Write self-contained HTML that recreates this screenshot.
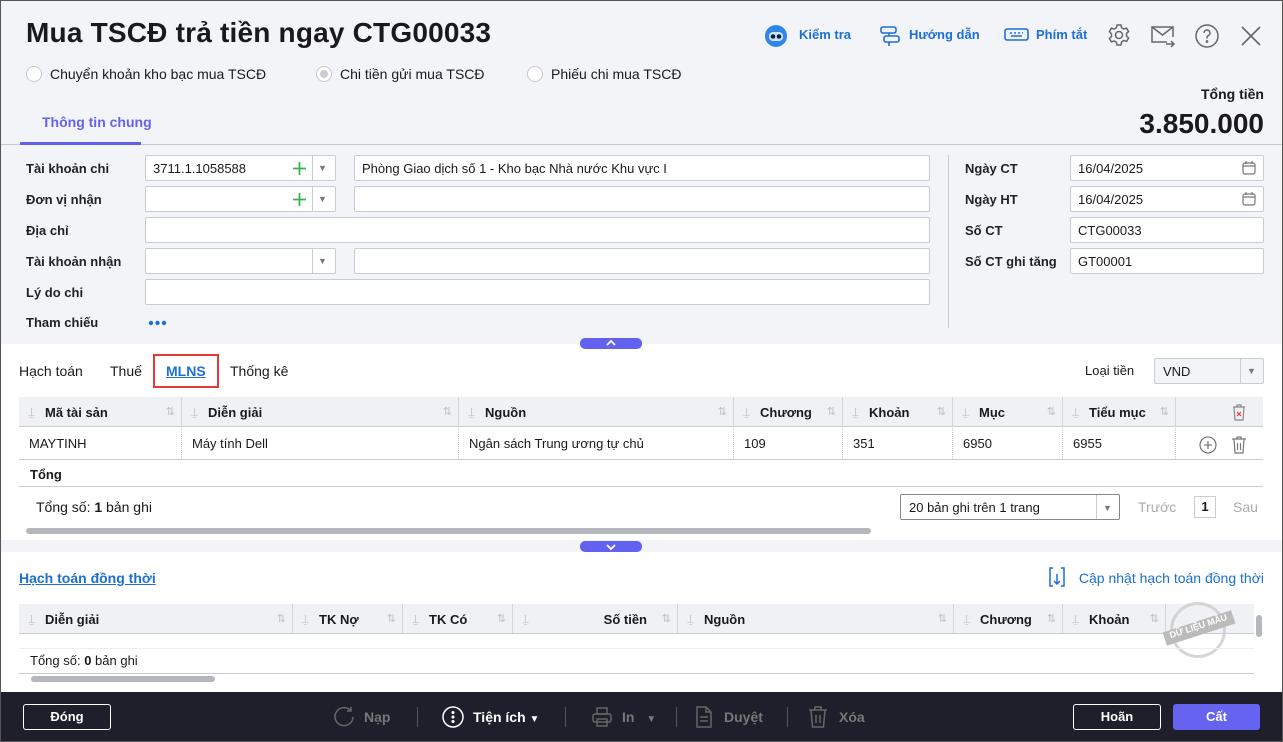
<!DOCTYPE html>
<html><head><meta charset="utf-8">
<style>
*{box-sizing:border-box;margin:0;padding:0}
body{width:1283px;height:742px;overflow:hidden;font-family:"Liberation Sans",sans-serif;font-size:13px;color:#1a1a1a;background:#fff;position:relative}
.a{position:absolute}
.frame{position:absolute;left:0;top:0;width:1283px;height:742px;border:1px solid #555;pointer-events:none;z-index:9}
.top{left:0;top:0;width:1283px;height:344px;background:#f3f4f8}
.lbl{font-weight:bold;font-size:13px;color:#222}
.inp{background:#fff;border:1px solid #c9ccd4;border-radius:2px;height:26px;padding:5px 7px;font-size:13px}
.radio{width:16px;height:16px;border:1px solid #c6c8cc;border-radius:50%;background:#fff}
.th{background:#f0f1f5;height:30px;border-bottom:1px solid #c9ccd4}
.col{position:absolute;top:0;height:100%;font-weight:bold;padding:8px 0 0 26px;border-right:1px solid #d4d6dc}
.col .pin{position:absolute;left:9px;top:8px;color:#bbb;font-weight:normal;font-size:12px}
.col .srt{position:absolute;right:6px;top:8px;color:#c0c0c0;font-weight:normal;font-size:11px}
.td{position:absolute;top:0;height:100%;padding:8px 0 0 10px;border-right:1px dotted #ccc}
.blue{color:#1c6fd4}
.fb{color:#777;font-weight:bold;font-size:14px}
.btn{border:1px solid #fff;border-radius:3px;color:#fff;font-weight:bold;text-align:center;height:26px;line-height:24px;font-size:13px}
.sep{width:1px;height:20px;background:#555;top:707px}
</style></head><body>
<div class="frame"></div>
<div class="a top"></div>
<div class="a" style="left:26px;top:17px;font-size:28px;font-weight:bold;color:#1a1a1a;letter-spacing:0.2px">Mua TSCĐ trả tiền ngay CTG00033</div>

<div class="a radio" style="left:26px;top:66px"></div><div class="a" style="left:50px;top:66px;font-size:14px">Chuyển khoản kho bạc mua TSCĐ</div>
<div class="a radio" style="left:316px;top:66px"><div style="width:8px;height:8px;border-radius:50%;background:#ccc;margin:3px"></div></div><div class="a" style="left:340px;top:66px;font-size:14px">Chi tiền gửi mua TSCĐ</div>
<div class="a radio" style="left:527px;top:66px"></div><div class="a" style="left:551px;top:66px;font-size:14px">Phiếu chi mua TSCĐ</div>

<svg class="a" style="left:764px;top:24px" width="24" height="24"><circle cx="12" cy="12" r="11" fill="#2f86e6"/><rect x="5" y="8" width="14" height="9" rx="4" fill="#cde3fb"/><circle cx="9" cy="12.5" r="2.3" fill="#123"/><circle cx="15" cy="12.5" r="2.3" fill="#123"/></svg>
<div class="a blue" style="left:799px;top:27px;font-weight:bold">Kiểm tra</div>
<svg class="a" style="left:878px;top:24px" width="24" height="24" fill="none" stroke="#1c6fd4" stroke-width="1.6"><rect x="3" y="3" width="15" height="6" rx="2"/><rect x="6" y="12" width="15" height="6" rx="2"/><path d="M11 9v3M11 18v4"/></svg>
<div class="a blue" style="left:909px;top:27px;font-weight:bold">Hướng dẫn</div>
<svg class="a" style="left:1004px;top:27px" width="25" height="16" fill="none" stroke="#1c6fd4" stroke-width="1.6"><rect x="1" y="2" width="23" height="11" rx="2"/><path d="M6 6h2M10 6h2M14 6h2M18 6h1M7 9h11"/></svg>
<div class="a blue" style="left:1036px;top:27px;font-weight:bold">Phím tắt</div>
<svg class="a" style="left:1107px;top:23px" width="24" height="24" fill="none" stroke="#666" stroke-width="1.5"><circle cx="12" cy="12" r="3.5"/><path d="M10 2h4l.6 2.8 2.3 1.3 2.7-.9 2 3.4-2.1 1.9v2.6l2.1 1.9-2 3.4-2.7-.9-2.3 1.3L14 22h-4l-.6-2.8-2.3-1.3-2.7.9-2-3.4 2.1-1.9v-2.6L2.4 8.6l2-3.4 2.7.9 2.3-1.3z"/></svg>
<svg class="a" style="left:1150px;top:24px" width="26" height="24" fill="none" stroke="#666" stroke-width="1.5"><path d="M17 18H2V3h21v10"/><path d="M2 3l10.5 8L23 3"/><path d="M16 20h8M21 17l3 3-3 3"/></svg>
<svg class="a" style="left:1195px;top:24px" width="24" height="24" fill="none" stroke="#666" stroke-width="1.5"><circle cx="12" cy="12" r="11"/><path d="M9 9a3 3 0 1 1 4 2.8c-.8.4-1 1-1 2v.7"/><circle cx="12" cy="17.5" r=".6" fill="#666"/></svg>
<svg class="a" style="left:1240px;top:25px" width="22" height="22" stroke="#666" stroke-width="1.6"><path d="M2 2l18 18M20 2L2 20"/></svg>

<div class="a" style="right:19px;top:86px;font-size:14px;font-weight:bold">Tổng tiền</div>
<div class="a" style="right:19px;top:108px;font-size:28px;font-weight:bold">3.850.000</div>

<div class="a" style="left:42px;top:114px;font-weight:bold;font-size:14px;color:#6563ee">Thông tin chung</div>
<div class="a" style="left:0;top:144px;width:1283px;height:1px;background:#c8c9cd"></div>
<div class="a" style="left:20px;top:142px;width:121px;height:3px;background:#5f5ff0"></div>

<div class="a lbl" style="left:26px;top:161px">Tài khoản chi</div>
<div class="a lbl" style="left:26px;top:192px">Đơn vị nhận</div>
<div class="a lbl" style="left:26px;top:223px">Địa chỉ</div>
<div class="a lbl" style="left:26px;top:254px">Tài khoản nhận</div>
<div class="a lbl" style="left:26px;top:285px">Lý do chi</div>
<div class="a lbl" style="left:26px;top:315px">Tham chiếu</div>
<svg class="a" style="left:148px;top:320px" width="20" height="6" fill="#1c6fd4"><circle cx="3" cy="3" r="2.2"/><circle cx="9.5" cy="3" r="2.2"/><circle cx="16" cy="3" r="2.2"/></svg>

<div class="a inp" style="left:145px;top:155px;width:191px">3711.1.1058588</div>
<div class="a inp" style="left:145px;top:186px;width:191px"></div>
<div class="a inp" style="left:145px;top:248px;width:191px"></div>
<div class="a" style="left:312px;top:156px;width:1px;height:24px;background:#c9ccd4"></div>
<div class="a" style="left:312px;top:187px;width:1px;height:24px;background:#c9ccd4"></div>
<div class="a" style="left:312px;top:249px;width:1px;height:24px;background:#c9ccd4"></div>
<svg class="a" style="left:292px;top:161px" width="15" height="15" stroke="#3bb34a" stroke-width="1.8"><path d="M7.5 1v13M1 7.5h13"/></svg>
<svg class="a" style="left:292px;top:192px" width="15" height="15" stroke="#3bb34a" stroke-width="1.8"><path d="M7.5 1v13M1 7.5h13"/></svg>
<div class="a" style="left:318px;top:163px;color:#777;font-size:9px">▼</div>
<div class="a" style="left:318px;top:194px;color:#777;font-size:9px">▼</div>
<div class="a" style="left:318px;top:256px;color:#777;font-size:9px">▼</div>
<div class="a inp" style="left:354px;top:155px;width:576px">Phòng Giao dịch số 1 - Kho bạc Nhà nước Khu vực I</div>
<div class="a inp" style="left:354px;top:186px;width:576px"></div>
<div class="a inp" style="left:145px;top:217px;width:785px"></div>
<div class="a inp" style="left:354px;top:248px;width:576px"></div>
<div class="a inp" style="left:145px;top:279px;width:785px"></div>

<div class="a" style="left:948px;top:155px;width:1px;height:173px;background:#c8c9cd"></div>
<div class="a lbl" style="left:965px;top:161px">Ngày CT</div>
<div class="a lbl" style="left:965px;top:192px">Ngày HT</div>
<div class="a lbl" style="left:965px;top:223px">Số CT</div>
<div class="a lbl" style="left:965px;top:254px">Số CT ghi tăng</div>
<div class="a inp" style="left:1070px;top:155px;width:194px">16/04/2025</div>
<div class="a inp" style="left:1070px;top:186px;width:194px">16/04/2025</div>
<div class="a inp" style="left:1070px;top:217px;width:194px">CTG00033</div>
<div class="a inp" style="left:1070px;top:248px;width:194px">GT00001</div>
<svg class="a" style="left:1242px;top:160px" width="14" height="15" fill="none" stroke="#777" stroke-width="1.2"><rect x="1" y="3" width="12" height="11" rx="2"/><path d="M1 6h12M4 1v3M10 1v3"/></svg>
<svg class="a" style="left:1242px;top:191px" width="14" height="15" fill="none" stroke="#777" stroke-width="1.2"><rect x="1" y="3" width="12" height="11" rx="2"/><path d="M1 6h12M4 1v3M10 1v3"/></svg>

<div class="a" style="left:580px;top:338px;width:62px;height:11px;background:#6361ef;border-radius:5px"></div>
<svg class="a" style="left:605px;top:339px" width="12" height="8" fill="none" stroke="#fff" stroke-width="1.8"><path d="M2 6l4-4 4 4"/></svg>

<div class="a" style="left:19px;top:363px;font-size:14px">Hạch toán</div>
<div class="a" style="left:110px;top:363px;font-size:14px">Thuế</div>
<div class="a" style="left:153px;top:354px;width:66px;height:34px;border:2px solid #e53935"></div>
<div class="a" style="left:166px;top:363px;font-size:14px;font-weight:bold;color:#1c6fd4;text-decoration:underline">MLNS</div>
<div class="a" style="left:230px;top:363px;font-size:14px">Thống kê</div>
<div class="a" style="left:1085px;top:363px;font-size:13px">Loại tiền</div>
<div class="a" style="left:1154px;top:358px;width:110px;height:26px;border:1px solid #c9ccd4;background:#f3f4f8;border-radius:2px;padding:5px 8px">VND</div>
<div class="a" style="left:1240px;top:359px;width:1px;height:24px;background:#c9ccd4"></div>
<div class="a" style="left:1247px;top:366px;color:#777;font-size:9px">▼</div>

<div class="a th" style="left:19px;top:397px;width:1244px">
<div class="col" style="left:0;width:163px"><span class="pin">⍊</span>Mã tài sản<span class="srt">⇅</span></div>
<div class="col" style="left:163px;width:277px"><span class="pin">⍊</span>Diễn giải<span class="srt">⇅</span></div>
<div class="col" style="left:440px;width:275px"><span class="pin">⍊</span>Nguồn<span class="srt">⇅</span></div>
<div class="col" style="left:715px;width:109px"><span class="pin">⍊</span>Chương<span class="srt">⇅</span></div>
<div class="col" style="left:824px;width:110px"><span class="pin">⍊</span>Khoản<span class="srt">⇅</span></div>
<div class="col" style="left:934px;width:110px"><span class="pin">⍊</span>Mục<span class="srt">⇅</span></div>
<div class="col" style="left:1044px;width:113px"><span class="pin">⍊</span>Tiểu mục<span class="srt">⇅</span></div>
</div>
<svg class="a" style="left:1231px;top:403px" width="16" height="18" fill="none" stroke="#888" stroke-width="1.2"><path d="M2 4h12M6 4V2h4v2M3 4l1 13h8l1-13"/><path d="M6 9l4 4M10 9l-4 4" stroke="#e33"/></svg>
<div class="a" style="left:19px;top:428px;width:1244px;height:32px;border-bottom:1px solid #c9ccd4">
<div class="td" style="left:0;width:163px">MAYTINH</div>
<div class="td" style="left:163px;width:277px">Máy tính Dell</div>
<div class="td" style="left:440px;width:275px">Ngân sách Trung ương tự chủ</div>
<div class="td" style="left:715px;width:109px">109</div>
<div class="td" style="left:824px;width:110px">351</div>
<div class="td" style="left:934px;width:110px">6950</div>
<div class="td" style="left:1044px;width:113px">6955</div>
</div>
<svg class="a" style="left:1199px;top:436px" width="18" height="18" fill="none" stroke="#666" stroke-width="1.1"><circle cx="9" cy="9" r="8"/><path d="M9 5v8M5 9h8"/></svg>
<svg class="a" style="left:1230px;top:435px" width="18" height="19" fill="none" stroke="#777" stroke-width="1.2"><path d="M2 4h14M7 4V2h4v2M4 4l1 14h8l1-14M7.5 8v7M10.5 8v7"/></svg>
<div class="a" style="left:19px;top:460px;width:1244px;height:27px;border-bottom:1px solid #c9ccd4;font-weight:bold;padding:7px 11px">Tổng</div>
<div class="a" style="left:36px;top:499px;font-size:14px">Tổng số: <b>1</b> bản ghi</div>
<div class="a" style="left:900px;top:494px;width:220px;height:26px;border:1px solid #888;border-radius:2px;padding:5px 8px">20 bản ghi trên 1 trang</div>
<div class="a" style="left:1096px;top:495px;width:1px;height:24px;background:#c9ccd4"></div>
<div class="a" style="left:1103px;top:503px;color:#777;font-size:9px">▼</div>
<div class="a" style="left:1138px;top:499px;color:#aaa;font-size:14px">Trước</div>
<div class="a" style="left:1194px;top:496px;width:22px;height:22px;border:1px solid #ccc;text-align:center;font-weight:bold;line-height:20px">1</div>
<div class="a" style="left:1233px;top:499px;color:#aaa;font-size:14px">Sau</div>
<div class="a" style="left:26px;top:528px;width:845px;height:6px;background:#b4b7bc;border-radius:3px"></div>

<div class="a" style="left:0;top:540px;width:1283px;height:12px;background:#f3f4f8"></div>
<div class="a" style="left:580px;top:541px;width:62px;height:11px;background:#6361ef;border-radius:5px"></div>
<svg class="a" style="left:605px;top:543px" width="12" height="8" fill="none" stroke="#fff" stroke-width="1.8"><path d="M2 2l4 4 4-4"/></svg>

<div class="a" style="left:19px;top:570px;font-size:14px;font-weight:bold;color:#1c6fd4;text-decoration:underline">Hạch toán đồng thời</div>
<svg class="a" style="left:1047px;top:566px" width="20" height="22" fill="none" stroke="#1c6fd4" stroke-width="1.5"><path d="M6 2H3v18h3M14 2h3v18h-3M10 8v10M7 15l3 3 3-3"/></svg>
<div class="a" style="right:19px;top:570px;color:#1c6fd4;font-size:14px">Cập nhật hạch toán đồng thời</div>

<div class="a th" style="left:19px;top:604px;width:1235px">
<div class="col" style="left:0;width:274px"><span class="pin">⍊</span>Diễn giải<span class="srt">⇅</span></div>
<div class="col" style="left:274px;width:110px"><span class="pin">⍊</span>TK Nợ<span class="srt">⇅</span></div>
<div class="col" style="left:384px;width:110px"><span class="pin">⍊</span>TK Có<span class="srt">⇅</span></div>
<div class="col" style="left:494px;width:165px;text-align:right;padding-right:30px"><span class="pin">⍊</span>Số tiền<span class="srt">⇅</span></div>
<div class="col" style="left:659px;width:276px"><span class="pin">⍊</span>Nguồn<span class="srt">⇅</span></div>
<div class="col" style="left:935px;width:109px"><span class="pin">⍊</span>Chương<span class="srt">⇅</span></div>
<div class="col" style="left:1044px;width:103px"><span class="pin">⍊</span>Khoản<span class="srt">⇅</span></div>
</div>
<div class="a" style="left:1170px;top:602px;width:56px;height:56px;border:3px solid #ccc;border-radius:50%;opacity:.8"></div>
<div class="a" style="left:1163px;top:621px;width:72px;height:14px;background:#bbb;color:#fff;font-size:9px;font-weight:bold;transform:rotate(-18deg);text-align:center">DỮ LIỆU MẪU</div>
<div class="a" style="left:1256px;top:615px;width:6px;height:22px;background:#b4b7bc;border-radius:3px"></div>
<div class="a" style="left:19px;top:648px;width:1235px;height:1px;background:#eee"></div>
<div class="a" style="left:30px;top:653px">Tổng số: <b>0</b> bản ghi</div>
<div class="a" style="left:19px;top:673px;width:1235px;height:1px;background:#c9ccd4"></div>
<div class="a" style="left:31px;top:676px;width:184px;height:6px;background:#b4b7bc;border-radius:3px"></div>

<div class="a" style="left:0;top:692px;width:1283px;height:50px;background:#1e1f2b"></div>
<div class="a btn" style="left:23px;top:704px;width:88px">Đóng</div>
<svg class="a" style="left:333px;top:706px" width="22" height="22" fill="none" stroke="#666" stroke-width="1.5"><path d="M18 5A9 9 0 1 0 20 11"/><path d="M18 1v4h-4"/></svg>
<div class="a fb" style="left:364px;top:709px">Nạp</div>
<div class="a sep" style="left:417px"></div>
<svg class="a" style="left:442px;top:706px" width="22" height="22" fill="none" stroke="#fff" stroke-width="1.5"><circle cx="11" cy="11" r="10"/><circle cx="11" cy="6.5" r=".8" fill="#fff"/><circle cx="11" cy="11" r=".8" fill="#fff"/><circle cx="11" cy="15.5" r=".8" fill="#fff"/></svg>
<div class="a" style="left:473px;top:709px;color:#fff;font-weight:bold;font-size:14px">Tiện ích <span style="font-size:10px">▼</span></div>
<div class="a sep" style="left:565px"></div>
<svg class="a" style="left:591px;top:706px" width="22" height="22" fill="none" stroke="#666" stroke-width="1.5"><rect x="6" y="2" width="10" height="6"/><rect x="2" y="8" width="18" height="8" rx="2"/><rect x="6" y="13" width="10" height="7"/></svg>
<div class="a fb" style="left:622px;top:709px">In <span style="font-size:10px;margin-left:8px">▼</span></div>
<div class="a sep" style="left:676px"></div>
<svg class="a" style="left:695px;top:706px" width="18" height="22" fill="none" stroke="#666" stroke-width="1.5"><path d="M2 1h9l5 5v15H2zM11 1v5h5M5 11h8M5 15h8"/></svg>
<div class="a fb" style="left:724px;top:709px">Duyệt</div>
<div class="a sep" style="left:787px"></div>
<svg class="a" style="left:807px;top:706px" width="22" height="22" fill="none" stroke="#666" stroke-width="1.5"><path d="M2 4h18M8 4V1h6v3M4 4l1.5 17h11L18 4M9 9v8M13 9v8"/></svg>
<div class="a fb" style="left:839px;top:709px">Xóa</div>
<div class="a btn" style="left:1073px;top:704px;width:88px">Hoãn</div>
<div class="a btn" style="left:1173px;top:704px;width:87px;background:#6563f0;border-color:#6563f0">Cất</div>
</body></html>
